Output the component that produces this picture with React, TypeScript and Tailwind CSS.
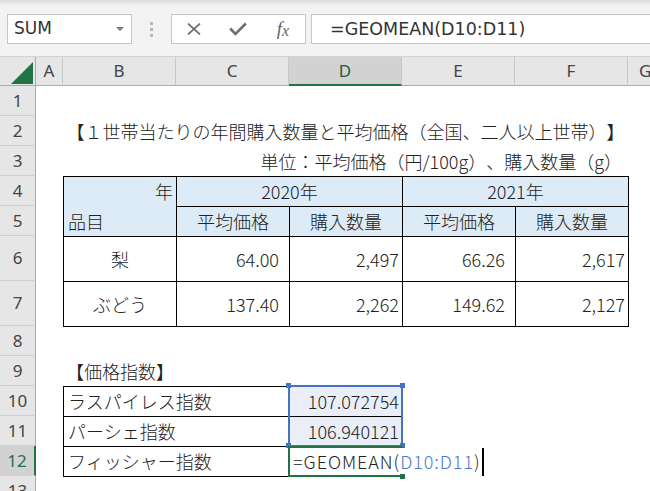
import React from "react";

const rowHeights = [30, 30, 30, 30, 30, 45, 45, 30, 30, 30, 30, 30, 30];

function FormulaBar() {
  return (
    <div className="h-[56px] shrink-0 bg-[#f3f3f3] flex flex-col">
      <div className="h-[6px] bg-gradient-to-b from-[#dcdcdc] to-[#f3f3f3]" />
      <div className="mt-[8px] h-[30px] flex items-stretch font-['DejaVu_Sans',sans-serif] text-[17px] text-[#333]">
        <div className="ml-[7px] w-[125px] bg-white border border-[#c6c6c6] flex items-center justify-between pl-[6px] pr-[7px]">
          <span>SUM</span>
          <svg width="8" height="4" viewBox="0 0 8 4">
            <path d="M0 0h8L4 4z" fill="#7a7a7a" />
          </svg>
        </div>
        <div className="w-[39px] flex flex-col items-center justify-center gap-[3px]">
          <span className="w-[3px] h-[3px] bg-[#b8b8b8]" />
          <span className="w-[3px] h-[3px] bg-[#b8b8b8]" />
          <span className="w-[3px] h-[3px] bg-[#b8b8b8]" />
        </div>
        <div className="w-[135px] bg-white border border-[#c6c6c6] flex items-center">
          <div className="w-[45px] flex justify-center">
            <svg width="14" height="12" viewBox="0 0 14 12">
              <path d="M1 0.5L13 11.5M13 0.5L1 11.5" stroke="#6e6e6e" strokeWidth="1.7" />
            </svg>
          </div>
          <div className="w-[45px] flex justify-center">
            <svg width="18" height="14" viewBox="0 0 18 14">
              <path d="M1.2 6.5L6.5 12L16.8 1.5" stroke="#6e6e6e" strokeWidth="2.6" fill="none" />
            </svg>
          </div>
          <div className="w-[45px] flex justify-center font-['Liberation_Serif',serif] italic text-[19px] text-[#666] leading-none">
            <span>f</span>
            <span className="text-[16px] mt-[4px]">x</span>
          </div>
        </div>
        <div className="ml-[5px] flex-1 bg-white border border-r-0 border-[#c6c6c6] flex items-center pl-[18px] whitespace-nowrap text-[17.5px]">
          =GEOMEAN(D10:D11)
        </div>
      </div>
    </div>
  );
}

function ColumnHeaders() {
  const cols = ["B", "C", "D", "E", "F"];
  return (
    <div className="h-[30px] shrink-0 flex bg-[#e6e6e6] border-t border-[#d4d4d4] font-['Noto_Sans',sans-serif] text-[17px] text-[#444]">
      <div className="w-[36px] shrink-0 relative border-r border-b border-[#ababab]">
        <svg className="absolute left-[11px] top-[5px]" width="22" height="22" viewBox="0 0 22 22">
          <path d="M22 0V22H0z" fill="#217346" />
        </svg>
      </div>
      <div className="w-[27px] shrink-0 border-r border-b border-r-[#c8c8c8] border-b-[#ababab] flex items-center justify-center">
        A
      </div>
      {cols.map((c) =>
        c === "D" ? (
          <div
            key={c}
            className="w-[113px] shrink-0 bg-[#d2d2d2] border-r border-r-[#c8c8c8] border-b-2 border-b-[#217346] flex items-center justify-center text-[#1f5f3a]"
          >
            {c}
          </div>
        ) : (
          <div
            key={c}
            className="w-[113px] shrink-0 border-r border-b border-r-[#c8c8c8] border-b-[#ababab] flex items-center justify-center"
          >
            {c}
          </div>
        )
      )}
      <div className="flex-1 border-b border-[#ababab] flex items-center pl-[11px]">G</div>
    </div>
  );
}

function RowHeaders() {
  return (
    <div className="w-[36px] shrink-0 flex flex-col bg-[#e6e6e6] font-['Noto_Sans',sans-serif] text-[17px] text-[#444]">
      {rowHeights.map((h, i) => {
        const n = i + 1;
        const active = n === 12;
        return (
          <div
            key={n}
            style={{ height: h }}
            className={
              active
                ? "shrink-0 bg-[#d2d2d2] border-b border-[#d0d0d0] border-r-2 border-r-[#217346] flex items-center justify-center text-[#217346]"
                : "shrink-0 border-b border-[#d0d0d0] border-r border-r-[#ababab] flex items-center justify-center"
            }
          >
            {n}
          </div>
        );
      })}
    </div>
  );
}

function PriceTable() {
  const head = "bg-[#ddebf7] border-r border-b border-black flex items-center";
  const body = "border-r border-b border-black flex items-center";
  return (
    <div className="ml-[27px] w-[566px] shrink-0 grid grid-cols-[113px_113px_113px_113px_113px] grid-rows-[30px_30px_45px_45px] border-l border-t border-black">
      <div className="row-span-2 bg-[#ddebf7] border-r border-b border-black flex flex-col">
        <div className="h-[29px] flex items-center justify-end pr-[3px]">年</div>
        <div className="h-[30px] flex items-center pl-[4px]">品目</div>
      </div>
      <div className={`col-span-2 justify-center ${head}`}>2020年</div>
      <div className={`col-span-2 justify-center ${head}`}>2021年</div>
      <div className={`justify-center ${head}`}>平均価格</div>
      <div className={`justify-center ${head}`}>購入数量</div>
      <div className={`justify-center ${head}`}>平均価格</div>
      <div className={`justify-center ${head}`}>購入数量</div>

      <div className={`justify-center ${body}`}>梨</div>
      <div className={`justify-end pr-[10px] ${body}`}>64.00</div>
      <div className={`justify-end pr-[3px] ${body}`}>2,497</div>
      <div className={`justify-end pr-[10px] ${body}`}>66.26</div>
      <div className={`justify-end pr-[3px] ${body}`}>2,617</div>

      <div className={`justify-center ${body}`}>ぶどう</div>
      <div className={`justify-end pr-[10px] ${body}`}>137.40</div>
      <div className={`justify-end pr-[3px] ${body}`}>2,262</div>
      <div className={`justify-end pr-[10px] ${body}`}>149.62</div>
      <div className={`justify-end pr-[3px] ${body}`}>2,127</div>
    </div>
  );
}

function IndexTable() {
  const label = "border-r border-b border-black flex items-center pl-[4px]";
  const value = "bg-[#e9eef8] border-r border-b border-black flex items-center justify-end pr-[3px]";
  return (
    <div className="relative ml-[27px] w-[340px] shrink-0 grid grid-cols-[226px_113px] grid-rows-[30px_30px_30px] border-l border-t border-black">
      <div className={label}>ラスパイレス指数</div>
      <div className={value}>107.072754</div>
      <div className={label}>パーシェ指数</div>
      <div className={value}>106.940121</div>
      <div className={label}>フィッシャー指数</div>
      <div className="border-b border-black flex items-center pl-[3px] whitespace-nowrap tracking-[0.95px]">
        <span className="shrink-0">=GEOMEAN(</span>
        <span className="shrink-0 text-[#4a78c8]">D10:D11</span>
        <span className="shrink-0 text-[#333]">)</span>
        <span className="shrink-0 ml-[1px] w-[2px] h-[28px] bg-black" />
      </div>

      {/* reference range D10:D11 */}
      <div className="absolute left-[224px] top-[-2px] w-[115px] h-[62px] border-2 border-[#4472c4] pointer-events-none" />
      <span className="absolute left-[222px] top-[-4px] w-[5px] h-[5px] bg-[#4472c4]" />
      <span className="absolute left-[336px] top-[-4px] w-[5px] h-[5px] bg-[#4472c4]" />
      <span className="absolute left-[222px] top-[56px] w-[5px] h-[5px] bg-[#4472c4]" />
      <span className="absolute left-[336px] top-[56px] w-[5px] h-[5px] bg-[#4472c4]" />

      {/* active cell D12 */}
      <div className="absolute left-[224px] top-[59px] w-[115px] h-[31px] border-l-2 border-t-2 border-b-2 border-[#217346] pointer-events-none" />
      <span className="absolute left-[336px] top-[87px] w-[5px] h-[5px] bg-[#217346]" />
    </div>
  );
}

function Sheet() {
  return (
    <div className="flex-1 flex flex-col bg-white text-[18px] text-[#222] font-light font-['Noto_Sans_CJK_JP',sans-serif] [text-spacing-trim:space-all]">
      <div className="h-[30px] shrink-0" />
      <div className="h-[30px] shrink-0 pl-[27px] flex">
        <div className="w-[565px] flex items-center justify-center whitespace-nowrap">
          【１世帯当たりの年間購入数量と平均価格（全国、二人以上世帯）】
        </div>
      </div>
      <div className="h-[30px] shrink-0 pl-[27px] flex">
        <div className="w-[565px] flex items-center justify-end pr-[6px] whitespace-nowrap">
          単位：平均価格（円/100g）、購入数量（g）
        </div>
      </div>
      <PriceTable />
      <div className="h-[29px] shrink-0" />
      <div className="h-[30px] shrink-0 pl-[27px] flex items-center">
        <span className="pl-[3px]">【価格指数】</span>
      </div>
      <IndexTable />
    </div>
  );
}

export default function App() {
  return (
    <div className="w-[650px] h-[491px] overflow-hidden bg-white flex flex-col">
      <FormulaBar />
      <ColumnHeaders />
      <div className="flex flex-1 min-h-0">
        <RowHeaders />
        <Sheet />
      </div>
    </div>
  );
}
